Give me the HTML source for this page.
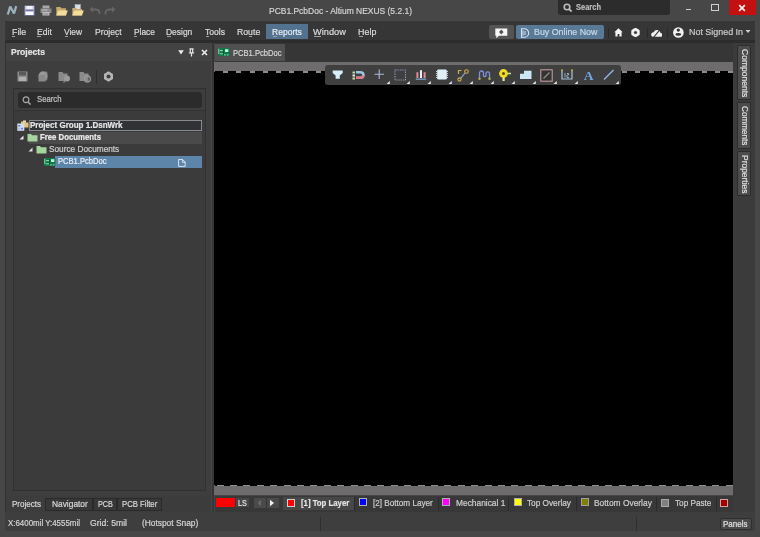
<!DOCTYPE html><html><head><meta charset="utf-8"><style>
html,body{margin:0;padding:0}
body{width:760px;height:537px;overflow:hidden;position:relative;background:#474747;font-family:"Liberation Sans",sans-serif}
body>div,body>svg{position:absolute}
.t,.v{white-space:nowrap;line-height:1;transform-origin:0 0}
body>*{filter:blur(0.3px)}
.t,.v{-webkit-text-stroke:0.2px}
</style></head><body>
<svg style="left:6px;top:5px" width="12" height="11" viewBox="0 0 12 11"><path d="M1.8 9.5 L4.2 1.5 L8 8.5 L10.2 1.2" stroke="#9cb0bd" stroke-width="2.3" fill="none" stroke-linejoin="bevel"/></svg>
<svg style="left:24px;top:5px" width="11" height="11" viewBox="0 0 11 11"><rect x="0.3" y="0.3" width="10.4" height="10.4" fill="#c4c4e4" stroke="#4a4a6a" stroke-width="0.6"/><rect x="2.5" y="1" width="6" height="3" fill="#f2f2ff"/><rect x="1.2" y="4.6" width="8.6" height="1.4" fill="#7a7a9c"/><rect x="2" y="7" width="7" height="3" fill="#fafaff"/></svg>
<svg style="left:40px;top:5px" width="12" height="11" viewBox="0 0 12 11"><rect x="2.5" y="0.5" width="7" height="3" fill="#a8a8a8"/><rect x="0.5" y="3.5" width="11" height="4.5" fill="#8a8a8a"/><rect x="1.5" y="4.5" width="6" height="1" fill="#c0c0c0"/><rect x="2.5" y="7" width="7" height="3.5" fill="#c0c0c0"/><rect x="3.5" y="8.5" width="5" height="1" fill="#808080"/></svg>
<svg style="left:56px;top:6px" width="12" height="10" viewBox="0 0 12 10"><path d="M0.3 1 H4.5 L5.5 2.3 H10 V9.5 H0.3Z" fill="#c8aa6a"/><path d="M2.2 4.5 H11.8 L10 9.5 H0.3Z" fill="#f2dc9e"/></svg>
<svg style="left:72px;top:4px" width="12" height="12" viewBox="0 0 12 12"><rect x="3" y="0.5" width="5.5" height="6" fill="#d8dce8" stroke="#a0a8b8" stroke-width="0.6"/><path d="M0.3 4 H4 L5 5 H10 V11.5 H0.3Z" fill="#c8aa6a"/><path d="M2.2 6.5 H11.8 L10 11.5 H0.3Z" fill="#f2dc9e"/></svg>
<svg style="left:89px;top:6px" width="12" height="9" viewBox="0 0 12 9"><path d="M3 3.5 H6.5 Q10.5 3.5 10.5 7 V8" stroke="#666" stroke-width="1.8" fill="none"/><path d="M0.5 3.5 L4 0.5 V6.5Z" fill="#666"/></svg>
<svg style="left:104px;top:6px" width="12" height="9" viewBox="0 0 12 9"><path d="M8.5 3.5 H5.5 Q1.5 3.5 1.5 7 V8.5" stroke="#666" stroke-width="1.8" fill="none"/><path d="M11.5 3.5 L8 0.5 V6.5Z" fill="#666"/></svg>
<div class="t" style="left:268.54px;top:6.17px;font-size:9.6px;font-weight:400;color:#d4d4d4;transform:scaleX(0.8824);">PCB1.PcbDoc - Altium NEXUS (5.2.1)</div>
<div style="left:558px;top:-3px;width:111.5px;height:17.5px;background:#2c2c2c;border-radius:3px"></div>
<svg style="left:563px;top:3px" width="10" height="9" viewBox="0 0 10 9"><circle cx="4" cy="4" r="2.8" stroke="#bdbdbd" stroke-width="1.6" fill="none"/><path d="M6 6 L8.6 8.6" stroke="#bdbdbd" stroke-width="1.8"/></svg>
<div class="t" style="left:575.60px;top:1.94px;font-size:9.4px;font-weight:700;color:#bcbcbc;transform:scaleX(0.8002);">Search</div>
<div style="left:686px;top:9px;width:5px;height:1.4px;background:#d0d0d0;"></div>
<div style="left:711px;top:3.6px;width:6.2px;height:5.4px;background:transparent;border:1.1px solid #cfcfcf;border-top-width:1.8px;box-sizing:content-box"></div>
<div style="left:729px;top:0px;width:26.5px;height:15.4px;background:#c41010;"></div>
<svg style="left:738px;top:4px" width="8" height="8" viewBox="0 0 8 8"><path d="M1.2 1.2 L6.8 6.8 M6.8 1.2 L1.2 6.8" stroke="#f2f2f2" stroke-width="1.7"/></svg>
<div style="left:4.7px;top:21.3px;width:750.3px;height:19.1px;background:#363636;"></div>
<div style="left:4.7px;top:40.4px;width:750.3px;height:2.8px;background:#2c2c2c;"></div>
<div style="left:265.5px;top:23.6px;width:42.7px;height:15.8px;background:#52728f;"></div>
<div class="t" style="left:11.69px;top:26.94px;font-size:9.4px;font-weight:400;color:#dcdcdc;transform:scaleX(0.9419);">File</div>
<div class="t" style="left:36.71px;top:26.94px;font-size:9.4px;font-weight:400;color:#dcdcdc;transform:scaleX(0.9146);">Edit</div>
<div class="t" style="left:63.89px;top:26.94px;font-size:9.4px;font-weight:400;color:#dcdcdc;transform:scaleX(0.8944);">View</div>
<div class="t" style="left:94.81px;top:26.94px;font-size:9.4px;font-weight:400;color:#dcdcdc;transform:scaleX(0.9146);">Project</div>
<div class="t" style="left:133.54px;top:26.94px;font-size:9.4px;font-weight:400;color:#dcdcdc;transform:scaleX(0.8859);">Place</div>
<div class="t" style="left:166.22px;top:26.94px;font-size:9.4px;font-weight:400;color:#dcdcdc;transform:scaleX(0.9022);">Design</div>
<div class="t" style="left:204.77px;top:26.94px;font-size:9.4px;font-weight:400;color:#dcdcdc;transform:scaleX(0.9129);">Tools</div>
<div class="t" style="left:237.10px;top:26.94px;font-size:9.4px;font-weight:400;color:#dcdcdc;transform:scaleX(0.9279);">Route</div>
<div class="t" style="left:272.12px;top:26.94px;font-size:9.4px;font-weight:400;color:#e8eef4;transform:scaleX(0.9098);">Reports</div>
<div class="t" style="left:313.08px;top:26.94px;font-size:9.4px;font-weight:400;color:#dcdcdc;transform:scaleX(0.9835);">Window</div>
<div class="t" style="left:357.89px;top:26.94px;font-size:9.4px;font-weight:400;color:#dcdcdc;transform:scaleX(0.9521);">Help</div>
<div style="left:12.2px;top:35.6px;width:3.2px;height:1.1px;background:#a0a0a0;"></div>
<div style="left:37.2px;top:35.6px;width:3.7px;height:1.1px;background:#a0a0a0;"></div>
<div style="left:65.0px;top:35.6px;width:3.2px;height:1.1px;background:#a0a0a0;"></div>
<div style="left:116.0px;top:35.6px;width:2.1px;height:1.1px;background:#a0a0a0;"></div>
<div style="left:133.8px;top:35.6px;width:3.4px;height:1.1px;background:#a0a0a0;"></div>
<div style="left:166.7px;top:35.6px;width:3.9px;height:1.1px;background:#a0a0a0;"></div>
<div style="left:205.9px;top:35.6px;width:2.8px;height:1.1px;background:#a0a0a0;"></div>
<div style="left:249.4px;top:35.6px;width:2.6px;height:1.1px;background:#a0a0a0;"></div>
<div style="left:273.0px;top:35.6px;width:3.8px;height:1.1px;background:#a0a0a0;"></div>
<div style="left:314.4px;top:35.6px;width:6.4px;height:1.1px;background:#a0a0a0;"></div>
<div style="left:358.5px;top:35.6px;width:4.5px;height:1.1px;background:#a0a0a0;"></div>
<div style="left:488.8px;top:24.8px;width:25.2px;height:14.2px;background:#545454;border-radius:2px"></div>
<svg style="left:495px;top:27.5px" width="13" height="11" viewBox="0 0 13 11"><path d="M0.3 0.4 H12.3 V7.8 H4 L1.3 10.3 V7.8 H0.3Z" fill="#f6f6f6"/><path d="M6.3 1.6 L8.6 4.1 L6.3 6.6 L4 4.1Z" fill="#545454"/></svg>
<div style="left:516px;top:24.8px;width:87.7px;height:14.2px;background:#597a97;border-radius:2px"></div>
<svg style="left:520px;top:27.5px" width="10" height="10" viewBox="0 0 10 10"><path d="M1.5 0.8 H4.5 A4.2 4.2 0 0 1 4.5 9.2 H1.5Z" stroke="#d4e2ee" stroke-width="1.1" fill="none"/><path d="M3 2.5 V7.5 M5 3 V7" stroke="#d4e2ee" stroke-width="1"/></svg>
<div class="t" style="left:534.29px;top:27.04px;font-size:9.4px;font-weight:400;color:#cad9e8;transform:scaleX(0.9427);">Buy Online Now</div>
<div style="left:608.4px;top:27.5px;width:1.0px;height:10.0px;background:#2a2a2a;"></div>
<svg style="left:614px;top:28px" width="9" height="9" viewBox="0 0 9 9"><path d="M0.3 4.3 L4.5 0.3 L8.7 4.3 H7.6 V8.6 H5.4 V6 H3.6 V8.6 H1.4 V4.3Z" fill="#f4f4f4"/></svg>
<svg style="left:631px;top:28px" width="9" height="9" viewBox="0 0 9 9"><circle cx="4.5" cy="4.5" r="3.2" fill="none" stroke="#f2f2f2" stroke-width="2.2"/><path d="M4.5 0 V9 M0.6 2.25 L8.4 6.75 M0.6 6.75 L8.4 2.25" stroke="#f2f2f2" stroke-width="1.8"/><circle cx="4.5" cy="4.5" r="1.5" fill="#363636"/></svg>
<div style="left:647px;top:27.5px;width:1px;height:10.0px;background:#2a2a2a;"></div>
<svg style="left:651px;top:27.5px" width="11" height="10" viewBox="0 0 11 10"><path d="M1.6 8.8 H9.3 A1.9 1.9 0 0 0 9.6 5 A3.7 3.7 0 0 0 2.6 4.2 A2.4 2.4 0 0 0 1.6 8.8Z" fill="#f2f2f2"/><path d="M2.2 9.8 L9.8 0.6" stroke="#363636" stroke-width="1.1"/></svg>
<div style="left:667.1px;top:27.5px;width:1.0px;height:10.0px;background:#2a2a2a;"></div>
<svg style="left:673px;top:26.5px" width="11" height="11" viewBox="0 0 11 11"><circle cx="5.4" cy="5.5" r="5.3" fill="#f2f2f2"/><circle cx="5.3" cy="3.1" r="1.7" fill="#363636"/><ellipse cx="5.3" cy="7.4" rx="2.9" ry="1.3" fill="#363636"/></svg>
<div class="t" style="left:689.29px;top:27.04px;font-size:9.4px;font-weight:400;color:#cccccc;transform:scaleX(0.9511);">Not Signed In</div>
<svg style="left:745px;top:29px" width="6" height="5" viewBox="0 0 6 5"><path d="M0.5 1 H5.5 L3 4Z" fill="#cfcfcf"/></svg>
<div style="left:4.8px;top:43.2px;width:1.5px;height:468.8px;background:#323232;"></div>
<div style="left:6.2px;top:43.4px;width:205.3px;height:17.6px;background:#434343;"></div>
<div class="t" style="left:10.63px;top:46.94px;font-size:9.4px;font-weight:700;color:#e4e4e4;transform:scaleX(0.9165);">Projects</div>
<svg style="left:178px;top:50px" width="6" height="5" viewBox="0 0 6 5"><path d="M0.2 0.3 H5.8 L3 4.6Z" fill="#ececec"/></svg>
<svg style="left:188px;top:48px" width="7" height="9" viewBox="0 0 7 9"><path d="M1.5 0.8 H5.5 M2.3 1 V4.8 H4.7 V1 M0.8 5 H6.2 M3.5 5 V8.5" stroke="#e8e8e8" stroke-width="1.2" fill="none"/></svg>
<svg style="left:201px;top:49px" width="7" height="7" viewBox="0 0 7 7"><path d="M1 1 L6 6 M6 1 L1 6" stroke="#efefef" stroke-width="1.5"/></svg>
<div style="left:6.2px;top:61px;width:205.3px;height:435px;background:#3e3e3e;"></div>
<svg style="left:17px;top:71px" width="11" height="11" viewBox="0 0 11 11"><rect x="0.5" y="0.5" width="10" height="10" fill="#8c8c8c"/><rect x="2" y="1" width="7" height="3.5" fill="#5a5a5a"/><rect x="2" y="6" width="7" height="4" fill="#b0b0b0"/></svg>
<svg style="left:38px;top:71px" width="11" height="11" viewBox="0 0 11 11"><rect x="2.5" y="0.5" width="7" height="9" rx="1" fill="#777"/><circle cx="5" cy="5" r="4.5" fill="#999"/><rect x="0.5" y="4" width="7" height="6.5" fill="#8a8a8a"/></svg>
<svg style="left:58px;top:71px" width="13" height="12" viewBox="0 0 13 12"><path d="M0.5 1 H4.5 L5.5 2.5 H9.5 V10 H0.5Z" fill="#8a8a8a"/><circle cx="9" cy="7.5" r="3" fill="#9a9a9a"/><path d="M7 10 L5.5 11.5" stroke="#888" stroke-width="1.2"/></svg>
<svg style="left:79px;top:71px" width="12" height="12" viewBox="0 0 12 12"><path d="M0.5 1 H4.5 L5.5 2.5 H9.5 V10 H0.5Z" fill="#8a8a8a"/><circle cx="8.5" cy="8" r="3" fill="none" stroke="#9a9a9a" stroke-width="1.3"/></svg>
<div style="left:95.8px;top:70px;width:1.0px;height:14px;background:#2e2e2e;"></div>
<svg style="left:103px;top:71px" width="11" height="11" viewBox="0 0 11 11"><path d="M5.5 0.3 L10 2.9 V8.1 L5.5 10.7 L1 8.1 V2.9Z" fill="#b4b4b4"/><circle cx="5.5" cy="5.5" r="2" fill="#3e3e3e"/></svg>
<div style="left:12.5px;top:88.2px;width:193.5px;height:402.4px;background:#3b3b3b;border:1.3px solid #313131;box-sizing:border-box"></div>
<div style="left:14.1px;top:89.6px;width:190.5px;height:20.6px;background:#3e3e3e;"></div>
<div style="left:14.1px;top:110.2px;width:190.5px;height:1.0px;background:#323232;"></div>
<div style="left:18px;top:92px;width:183.5px;height:15.5px;background:#2b2b2b;border-radius:3px"></div>
<svg style="left:22px;top:96px" width="10" height="9" viewBox="0 0 10 9"><circle cx="4" cy="3.8" r="2.9" stroke="#a9a9a9" stroke-width="1.2" fill="none"/><path d="M6 6 L8.6 8.6" stroke="#a9a9a9" stroke-width="1.4"/></svg>
<div class="t" style="left:37.38px;top:94.88px;font-size:9.0px;font-weight:400;color:#c4c4c4;transform:scaleX(0.8589);">Search</div>
<div style="left:29px;top:120.2px;width:172.7px;height:11.3px;background:#303236;border:1px solid #868a8e;box-sizing:border-box"></div>
<svg style="left:17px;top:120px" width="12" height="11" viewBox="0 0 12 11"><path d="M4 1.5 H7 L8 2.5 H11.5 V7.5 H4Z" fill="#e2c47e"/><rect x="6" y="0.5" width="3" height="2" fill="#f0e0b0"/><rect x="0.3" y="3.5" width="7" height="7.3" fill="#d4dcee"/><rect x="1.3" y="5" width="2" height="1.6" fill="#6688cc"/><rect x="4" y="7.8" width="2" height="1.6" fill="#6688cc"/><rect x="1.3" y="7.8" width="2" height="1.6" fill="#a8b8e0"/></svg>
<div class="t" style="left:30.31px;top:122.36px;font-size:8.2px;font-weight:700;color:#e6e6e6;transform:scaleX(0.9796);">Project Group 1.DsnWrk</div>
<div style="left:29px;top:131.5px;width:172.7px;height:12.3px;background:#4a4a4a;"></div>
<svg style="left:19px;top:135px" width="5" height="5" viewBox="0 0 5 5"><path d="M4.5 0.5 V4.5 H0.5Z" fill="#e8e8e8"/></svg>
<svg style="left:27px;top:133px" width="11" height="9" viewBox="0 0 11 9"><path d="M0.5 1 H4 L5 2.2 H10.5 V8.5 H0.5Z" fill="#a6d49e"/></svg>
<div class="t" style="left:39.52px;top:134.16px;font-size:8.2px;font-weight:700;color:#ececec;transform:scaleX(0.9502);">Free Documents</div>
<svg style="left:28px;top:147px" width="5" height="5" viewBox="0 0 5 5"><path d="M4.5 0.5 V4.5 H0.5Z" fill="#e0e0e0"/></svg>
<svg style="left:35.5px;top:145px" width="11" height="9" viewBox="0 0 11 9"><path d="M0.5 1 H4 L5 2.2 H10.5 V8.5 H0.5Z" fill="#a6d49e"/></svg>
<div class="t" style="left:49.02px;top:146.06px;font-size:8.2px;font-weight:400;color:#d0d0d0;transform:scaleX(1.0088);">Source Documents</div>
<div style="left:55.4px;top:155.8px;width:146.3px;height:12.1px;background:#5d84a9;"></div>
<svg style="left:43.8px;top:157.5px" width="12" height="8" viewBox="0 0 12 8"><rect x="0" y="0" width="11.5" height="8" fill="#11784a"/><path d="M0.8 0.8 V6 M2 2.6 H5 M2 5.8 H5" stroke="#8fdcb4" stroke-width="1"/><rect x="7" y="1.2" width="3.3" height="2.8" fill="#b8f8d8"/><path d="M6 6.9 H7.8 M8.8 6.9 H10.6" stroke="#8fdcb4" stroke-width="1"/><path d="M5.5 1 V7" stroke="#0b5a34" stroke-width="1"/></svg>
<div class="t" style="left:57.54px;top:156.52px;font-size:8.6px;font-weight:400;color:#e8eef6;transform:scaleX(0.8817);">PCB1.PcbDoc</div>
<svg style="left:177.5px;top:158.5px" width="8" height="8" viewBox="0 0 8 8"><path d="M0.6 0.5 H4.6 L7.2 3.1 V7.4 H0.6Z M4.4 0.6 V3.3 H7.2" fill="none" stroke="#e4ecf4" stroke-width="0.9"/></svg>
<div style="left:6.2px;top:496px;width:205.3px;height:16px;background:#3c3c3c;"></div>
<div style="left:7.7px;top:496.6px;width:37.8px;height:14.0px;background:#3d3d3d;"></div>
<div style="left:45.2px;top:497.5px;width:48.1px;height:13.1px;background:#383838;border:1px solid #2a2a2a;box-sizing:border-box"></div>
<div style="left:93.3px;top:497.5px;width:23.7px;height:13.1px;background:#383838;border:1px solid #2a2a2a;box-sizing:border-box"></div>
<div style="left:117px;top:497.5px;width:45px;height:13.1px;background:#383838;border:1px solid #2a2a2a;box-sizing:border-box"></div>
<div class="t" style="left:11.62px;top:499.55px;font-size:8.8px;font-weight:400;color:#d8d8d8;transform:scaleX(0.9117);">Projects</div>
<div class="t" style="left:51.69px;top:499.55px;font-size:8.8px;font-weight:400;color:#d8d8d8;transform:scaleX(0.9507);">Navigator</div>
<div class="t" style="left:98.38px;top:499.55px;font-size:8.8px;font-weight:400;color:#d8d8d8;transform:scaleX(0.8252);">PCB</div>
<div class="t" style="left:121.74px;top:499.55px;font-size:8.8px;font-weight:400;color:#d8d8d8;transform:scaleX(0.8795);">PCB Filter</div>
<div style="left:211.5px;top:43.2px;width:2.7px;height:468.8px;background:#353535;"></div>
<div style="left:215px;top:43.4px;width:518px;height:18.6px;background:#363636;"></div>
<div style="left:214.8px;top:44.2px;width:70.2px;height:17.1px;background:#505050;"></div>
<svg style="left:218.2px;top:48.2px" width="12" height="8" viewBox="0 0 12 8"><rect x="0" y="0" width="11.5" height="8" fill="#11784a"/><path d="M0.8 0.8 V6 M2 2.6 H5 M2 5.8 H5" stroke="#8fdcb4" stroke-width="1"/><rect x="7" y="1.2" width="3.3" height="2.8" fill="#b8f8d8"/><path d="M6 6.9 H7.8 M8.8 6.9 H10.6" stroke="#8fdcb4" stroke-width="1"/><path d="M5.5 1 V7" stroke="#0b5a34" stroke-width="1"/></svg>
<div class="t" style="left:233.42px;top:47.90px;font-size:9.8px;font-weight:400;color:#dadada;transform:scaleX(0.7745);">PCB1.PcbDoc</div>
<div style="left:214.2px;top:62.3px;width:518.8px;height:9.7px;background:#6e6c6c;"></div>
<div style="left:214.3px;top:72px;width:518.5px;height:413.3px;background:#000000;"></div>
<div style="left:214.5px;top:70.8px;width:518.5px;height:1.8px;background:transparent;background:repeating-linear-gradient(90deg,#000 0 7.9px,#8e8c8c 7.9px 12.9px,#000 12.9px 13.3px);"></div>
<div style="left:214.2px;top:485.3px;width:518.8px;height:10.0px;background:#6e6c6c;"></div>
<div style="left:214.5px;top:484.8px;width:518.5px;height:1.6px;background:transparent;background:repeating-linear-gradient(90deg,#000 0 1.6px,#8e8c8c 1.6px 8.6px,#000 8.6px 13.4px);"></div>
<div style="left:325px;top:64.6px;width:296.4px;height:20.1px;background:#3f3f3f;border-radius:3px"></div>
<svg style="left:332px;top:70px" width="12" height="10" viewBox="0 0 12 10"><path d="M0.7 0.5 H10.7 V3 L7.8 5.5 V8.8 H3.6 V5.5 L0.7 3Z" fill="#d5eef8"/></svg>
<svg style="left:352px;top:70px" width="14" height="10" viewBox="0 0 14 10"><rect x="0.5" y="1.5" width="2.5" height="2" fill="#b8e0a0"/><rect x="0.5" y="4.5" width="2.5" height="2" fill="#e8e8f0"/><rect x="0.5" y="7.5" width="2.5" height="2" fill="#d8d890"/><path d="M4 2.2 H8.5 A3 2.8 0 0 1 8.5 7.8 H4" stroke="#9cc4e4" stroke-width="2.6" fill="none"/><path d="M4 7.8 H8.5 A3 2.8 0 0 0 11.4 5.5" stroke="#e07888" stroke-width="2.6" fill="none"/></svg>
<svg style="left:374px;top:69px" width="11" height="11" viewBox="0 0 11 11"><path d="M5.2 0.5 V10 M0.5 5.2 H10" stroke="#a9b9d9" stroke-width="1.1"/></svg>
<svg style="left:394px;top:69px" width="13" height="12" viewBox="0 0 13 12"><rect x="1" y="1" width="10.5" height="10" fill="none" stroke="#8796b4" stroke-width="1.1" stroke-dasharray="1.4 1"/></svg>
<svg style="left:415px;top:69px" width="12" height="11" viewBox="0 0 12 11"><rect x="1.4" y="3.2" width="2" height="5.8" fill="#e08c9a"/><rect x="5" y="1.2" width="2" height="7.8" fill="#eef0f6"/><rect x="8.6" y="3.2" width="2" height="5.8" fill="#e08c9a"/><rect x="0.8" y="9.6" width="10.4" height="1.1" fill="#8cb4e4"/></svg>
<svg style="left:436px;top:69px" width="12" height="11" viewBox="0 0 12 11"><rect x="1.2" y="0.8" width="9.6" height="9.4" fill="#e2eef6"/><path d="M0 2.5 H1.5 M0 4.5 H1.5 M0 6.5 H1.5 M0 8.5 H1.5 M10.5 2.5 H12 M10.5 4.5 H12 M10.5 6.5 H12 M10.5 8.5 H12 M3 0 V1 M5 0 V1 M7 0 V1 M9 0 V1 M3 10 V11 M5 10 V11 M7 10 V11 M9 10 V11" stroke="#d0e0ea" stroke-width="0.9"/></svg>
<svg style="left:457px;top:69px" width="13" height="13" viewBox="0 0 13 13"><path d="M1.5 5 V1.5 H4.5" stroke="#cfae4a" stroke-width="1.2" fill="none"/><circle cx="9.5" cy="2.5" r="1.8" fill="none" stroke="#cfae4a" stroke-width="1.1"/><path d="M8.2 3.8 L3.2 9.8" stroke="#8aa0c8" stroke-width="1.2"/><circle cx="2.5" cy="10.5" r="1.6" fill="none" stroke="#cfae4a" stroke-width="1.1"/></svg>
<svg style="left:478px;top:69px" width="13" height="12" viewBox="0 0 13 12"><path d="M1.5 9 V4 A2 2 0 0 1 5.5 4 V7 A1.7 1.7 0 0 0 8 7 V4 A2 2 0 0 1 11.5 4 V9" stroke="#7c92d8" stroke-width="1.3" fill="none"/><circle cx="1.5" cy="9.8" r="1.2" fill="#b0b060"/><circle cx="11.5" cy="9.8" r="1.2" fill="#b0b060"/></svg>
<svg style="left:498px;top:68px" width="14" height="14" viewBox="0 0 14 14"><rect x="4.5" y="8" width="2.2" height="5" fill="#f0e8a0"/><circle cx="5.5" cy="5.5" r="4.4" fill="#f2dc2a"/><circle cx="5.5" cy="5.5" r="1.5" fill="#5a4a10"/><path d="M9.5 5.5 H13" stroke="#c8e890" stroke-width="1.6"/></svg>
<svg style="left:519px;top:70px" width="13" height="10" viewBox="0 0 13 10"><path d="M1 3.8 H5 V0.7 H12.5 V9 H1Z" fill="#cde6f6"/></svg>
<svg style="left:540px;top:69px" width="13" height="13" viewBox="0 0 13 13"><rect x="0.8" y="0.8" width="11.4" height="11.4" fill="#333" stroke="#c49a9e" stroke-width="1.1"/><path d="M3.5 9.5 L9.5 3.5" stroke="#8a8a7a" stroke-width="1.4"/></svg>
<svg style="left:561px;top:69px" width="12" height="11" viewBox="0 0 12 11"><path d="M1 1.5 V10 H11 V1.5" stroke="#a8c2d8" stroke-width="1.2" fill="none"/><circle cx="1" cy="1.3" r="1" fill="#c8b050"/><circle cx="11" cy="1.3" r="1" fill="#c8b050"/><path d="M4 4 V8.5 M6 4.5 H7.5 V6 H6 V8.5 H8" stroke="#a8c2d8" stroke-width="0.8" fill="none"/></svg>
<svg style="left:582px;top:68px" width="13" height="13" viewBox="0 0 13 13"><text x="6.5" y="11.6" text-anchor="middle" font-family="Liberation Serif" font-weight="700" font-size="13.5" fill="#74a6e8">A</text></svg>
<svg style="left:603px;top:69px" width="12" height="12" viewBox="0 0 12 12"><path d="M1 10.5 L10.5 1" stroke="#8cb6e2" stroke-width="1.5"/></svg>
<svg style="left:386.3px;top:80.5px" width="4" height="3" viewBox="0 0 4 3"><path d="M3.8 0 V3 H0.5Z" fill="#e8e8e8"/></svg>
<svg style="left:406.3px;top:80.5px" width="4" height="3" viewBox="0 0 4 3"><path d="M3.8 0 V3 H0.5Z" fill="#e8e8e8"/></svg>
<svg style="left:426.8px;top:80.5px" width="4" height="3" viewBox="0 0 4 3"><path d="M3.8 0 V3 H0.5Z" fill="#e8e8e8"/></svg>
<svg style="left:448px;top:80.5px" width="4" height="3" viewBox="0 0 4 3"><path d="M3.8 0 V3 H0.5Z" fill="#e8e8e8"/></svg>
<svg style="left:469px;top:80.5px" width="4" height="3" viewBox="0 0 4 3"><path d="M3.8 0 V3 H0.5Z" fill="#e8e8e8"/></svg>
<svg style="left:490px;top:80.5px" width="4" height="3" viewBox="0 0 4 3"><path d="M3.8 0 V3 H0.5Z" fill="#e8e8e8"/></svg>
<svg style="left:511px;top:80.5px" width="4" height="3" viewBox="0 0 4 3"><path d="M3.8 0 V3 H0.5Z" fill="#e8e8e8"/></svg>
<svg style="left:532px;top:80.5px" width="4" height="3" viewBox="0 0 4 3"><path d="M3.8 0 V3 H0.5Z" fill="#e8e8e8"/></svg>
<svg style="left:553px;top:80.5px" width="4" height="3" viewBox="0 0 4 3"><path d="M3.8 0 V3 H0.5Z" fill="#e8e8e8"/></svg>
<svg style="left:573.5px;top:80.5px" width="4" height="3" viewBox="0 0 4 3"><path d="M3.8 0 V3 H0.5Z" fill="#e8e8e8"/></svg>
<svg style="left:615px;top:80.5px" width="4" height="3" viewBox="0 0 4 3"><path d="M3.8 0 V3 H0.5Z" fill="#e8e8e8"/></svg>
<div style="left:733px;top:43.4px;width:22px;height:468.6px;background:#3b3b3b;"></div>
<div style="left:755px;top:43.4px;width:5px;height:493.6px;background:#474747;"></div>
<div style="left:737.2px;top:45px;width:14.0px;height:55.3px;background:#4c4c4c;border:1px solid #2c2c2c;box-sizing:border-box;border-radius:1px"></div>
<div class="v" style="left:748.78px;top:48.54px;font-size:9.2px;color:#e2e2e2;transform:rotate(90deg) scaleX(0.9285);">Components</div>
<div style="left:737.2px;top:102.4px;width:14.0px;height:46.3px;background:#4c4c4c;border:1px solid #2c2c2c;box-sizing:border-box;border-radius:1px"></div>
<div class="v" style="left:748.78px;top:105.96px;font-size:9.2px;color:#e2e2e2;transform:rotate(90deg) scaleX(0.8871);">Comments</div>
<div style="left:737.2px;top:151.3px;width:14.0px;height:45.2px;background:#4c4c4c;border:1px solid #2c2c2c;box-sizing:border-box;border-radius:1px"></div>
<div class="v" style="left:748.78px;top:154.61px;font-size:9.2px;color:#e2e2e2;transform:rotate(90deg) scaleX(0.9199);">Properties</div>
<div style="left:214.5px;top:495.5px;width:518.5px;height:16.5px;background:#383838;"></div>
<div style="left:216.4px;top:497.7px;width:19.0px;height:9.7px;background:#ff0000;"></div>
<div style="left:235.7px;top:497.9px;width:13.8px;height:9.5px;background:#474747;"></div>
<div class="t" style="left:238.19px;top:498.55px;font-size:8.8px;font-weight:400;color:#e0e0e0;transform:scaleX(0.8138);">LS</div>
<div style="left:253.8px;top:497.6px;width:24.9px;height:10.4px;background:#4a4a4a;"></div>
<div style="left:266px;top:497.6px;width:1px;height:10.4px;background:#353535;"></div>
<svg style="left:257px;top:499px" width="5" height="8" viewBox="0 0 5 8"><path d="M4 0.8 V7.2 L0.8 4Z" fill="#6a6a6a"/></svg>
<svg style="left:269px;top:499px" width="6" height="8" viewBox="0 0 6 8"><path d="M1 0.8 V7.2 L5 4Z" fill="#f0f0f0"/></svg>
<div style="left:283px;top:496.8px;width:71px;height:13.7px;background:#474747;"></div>
<div style="left:287px;top:498.5px;width:8px;height:8.0px;background:#ff0000;border:1px solid #d0d0d0;box-sizing:border-box"></div>
<div class="t" style="left:300.96px;top:499.35px;font-size:8.8px;font-weight:700;color:#e4e4e4;transform:scaleX(0.8838);">[1] Top Layer</div>
<div style="left:354.1px;top:497px;width:1.0px;height:14px;background:#2a2a2a;"></div>
<div style="left:437.5px;top:497px;width:1.0px;height:14px;background:#2a2a2a;"></div>
<div style="left:508.4px;top:497px;width:1.0px;height:14px;background:#2a2a2a;"></div>
<div style="left:576.2px;top:497px;width:1.0px;height:14px;background:#2a2a2a;"></div>
<div style="left:655.8px;top:497px;width:1.0px;height:14px;background:#2a2a2a;"></div>
<div style="left:715.8px;top:497px;width:1.0px;height:14px;background:#2a2a2a;"></div>
<div style="left:359.4px;top:498.3px;width:8.0px;height:8.0px;background:#0000ff;border:1px solid #b0b0b0;box-sizing:border-box"></div>
<div class="t" style="left:373.42px;top:499.35px;font-size:8.8px;font-weight:400;color:#cfcfcf;transform:scaleX(0.9257);">[2] Bottom Layer</div>
<div style="left:442px;top:498.3px;width:8px;height:8.0px;background:#ff00ff;border:1px solid #b0b0b0;box-sizing:border-box"></div>
<div class="t" style="left:456.09px;top:499.35px;font-size:8.8px;font-weight:400;color:#cfcfcf;transform:scaleX(0.9522);">Mechanical 1</div>
<div style="left:513.7px;top:498.3px;width:8.0px;height:8.0px;background:#ffff00;border:1px solid #b0b0b0;box-sizing:border-box"></div>
<div class="t" style="left:526.88px;top:499.35px;font-size:8.8px;font-weight:400;color:#cfcfcf;transform:scaleX(0.9371);">Top Overlay</div>
<div style="left:581px;top:498.3px;width:8px;height:8.0px;background:#808000;border:1px solid #a0a0a0;box-sizing:border-box"></div>
<div class="t" style="left:594.18px;top:499.35px;font-size:8.8px;font-weight:400;color:#cfcfcf;transform:scaleX(0.9540);">Bottom Overlay</div>
<div style="left:661.3px;top:498.5px;width:8.0px;height:8.0px;background:#808080;border:1px solid #a8a8a8;box-sizing:border-box"></div>
<div class="t" style="left:675.28px;top:499.35px;font-size:8.8px;font-weight:400;color:#cfcfcf;transform:scaleX(0.9297);">Top Paste</div>
<div style="left:720.3px;top:498.5px;width:8.0px;height:8.0px;background:#a00000;border:1px solid #d8a0a0;box-sizing:border-box"></div>
<div style="left:4.7px;top:512px;width:750.3px;height:19px;background:#3e3e3e;"></div>
<div style="left:0px;top:531px;width:760px;height:6px;background:#474747;"></div>
<div class="t" style="left:8.38px;top:519.45px;font-size:8.8px;font-weight:400;color:#d4d4d4;transform:scaleX(0.8984);">X:6400mil Y:4555mil</div>
<div class="t" style="left:90.03px;top:519.45px;font-size:8.8px;font-weight:400;color:#d4d4d4;transform:scaleX(0.9832);">Grid: 5mil</div>
<div class="t" style="left:142.22px;top:519.45px;font-size:8.8px;font-weight:400;color:#d4d4d4;transform:scaleX(0.9500);">(Hotspot Snap)</div>
<div style="left:320px;top:516.5px;width:1px;height:14.0px;background:#2e2e2e;"></div>
<div style="left:636px;top:516.5px;width:1px;height:14.0px;background:#2e2e2e;"></div>
<div style="left:719.8px;top:518px;width:32.4px;height:12px;background:#4b4b4b;border:1px solid #2e2e2e;box-sizing:border-box;border-radius:2px"></div>
<div class="t" style="left:723.42px;top:520.35px;font-size:8.8px;font-weight:400;color:#e0e0e0;transform:scaleX(0.9094);">Panels</div>
</body></html>
